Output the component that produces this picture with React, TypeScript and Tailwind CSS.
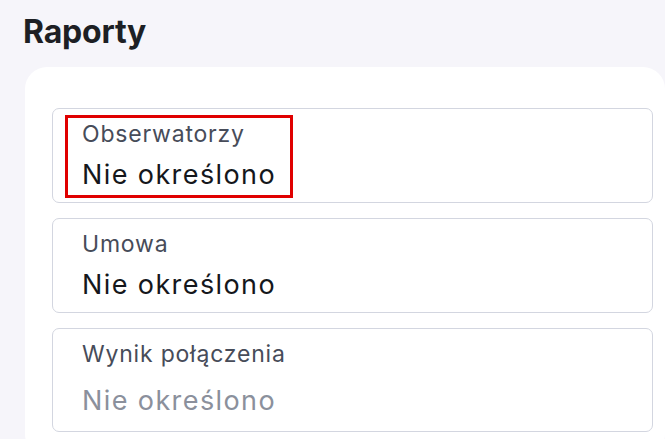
import React from 'react'

type Field = {
  label: string
  value: string
  empty?: boolean
  highlighted?: boolean
  tall?: boolean
}

const fields: Field[] = [
  { label: 'Obserwatorzy', value: 'Nie określono', highlighted: true },
  { label: 'Umowa', value: 'Nie określono' },
  { label: 'Wynik połączenia', value: 'Nie określono', empty: true, tall: true },
]

function ReportField({ field }: { field: Field }) {
  return (
    <div
      className={`rounded-[7px] border-[1.5px] border-[#d3d6e0] bg-white px-[29px] pt-[11px] ${
        field.tall ? 'pb-[13px]' : 'pb-[10px]'
      }`}
    >
      <div className="relative">
        {field.highlighted ? (
          <div className="pointer-events-none absolute -left-[17px] -top-[5px] h-[83px] w-[228px] border-[3px] border-[#e00000]" />
        ) : null}
        <p className="text-[23px] leading-[28px] tracking-[0.8px] text-[#474c59]">{field.label}</p>
        <p
          className={`text-[27px] leading-[34px] tracking-[1.4px] ${
            field.empty ? 'mt-[16px] text-[#8b909c]' : 'mt-[10px] text-[#15171c]'
          }`}
        >
          {field.value}
        </p>
      </div>
    </div>
  )
}

export default function App() {
  return (
    <div className="h-[439px] w-[665px] overflow-hidden bg-[#f6f5fa] font-['Inter',sans-serif]">
      <div className="pl-[23px] pt-[12px]">
        <h1 className="text-[32px] font-bold leading-[40px] tracking-[-0.2px] text-[#1d1f24]">Raporty</h1>
      </div>
      <div className="ml-[25px] mt-[15px] rounded-[22px] bg-white pb-6 pl-[27px] pr-[12px] pt-[41px]">
        <div className="flex flex-col gap-[15px]">
          {fields.map((field) => (
            <ReportField key={field.label} field={field} />
          ))}
        </div>
      </div>
    </div>
  )
}
